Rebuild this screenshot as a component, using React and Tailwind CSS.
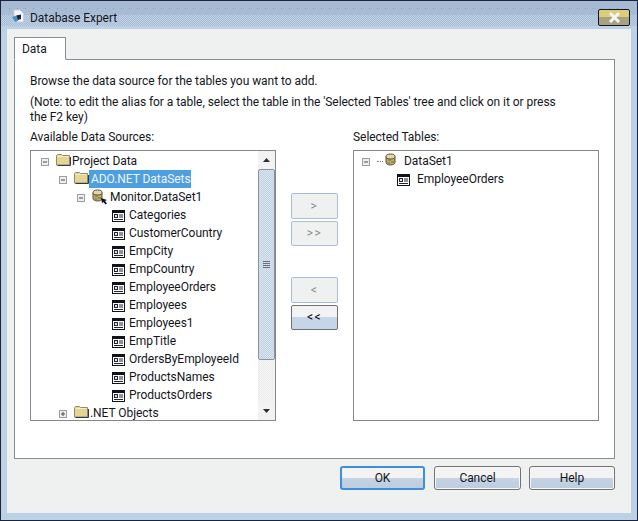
import React from "react";

const Expander = ({ plus }) => (
  <svg width="8" height="8" viewBox="0 0 8 8" className="shrink-0 mt-[2px]">
    <rect x="0.5" y="0.5" width="7" height="7" fill="#eeeeee" stroke="#989da6" />
    <path d={plus ? "M2 4H6M4 2V6" : "M2 4H6"} stroke="#4a4a4a" />
  </svg>
);

const Folder = () => (
  <svg width="15" height="12" viewBox="0 0 15 12" className="shrink-0 -mt-[2px]">
    <path d="M0.5 11V1.5L1.5 0.5H5.5L6.5 1.5H13.5V11Z" fill="#e4d690" stroke="#8c8a70" />
    <path d="M1.5 11.5H14.5V3" fill="none" stroke="#33374d" />
    <path d="M1.5 2.5H12.5" stroke="#f3ecc4" />
  </svg>
);

const TableIcon = () => (
  <svg width="13" height="12" viewBox="0 0 13 12" className="shrink-0 mt-[2px]">
    <rect x="0.5" y="0.5" width="12" height="11" fill="#fff" stroke="#10121c" />
    <rect x="1" y="1" width="11" height="2" fill="#10121c" />
    <rect x="2.5" y="4.5" width="3" height="3" fill="#dfe8f3" stroke="#20242f" />
    <path d="M7 5H11M7 7H11M2 9.5H11" stroke="#20242f" />
  </svg>
);

const DbIcon = ({ cursor }) => (
  <svg width="17" height="16" viewBox="0 0 17 16" className="shrink-0">
    <path d="M1 3.5V9.5C1 11 3 12 5.5 12S10 11 10 9.5V3.5Z" fill="#c2ab5c" stroke="#55503f" />
    <ellipse cx="5.5" cy="3.5" rx="4.5" ry="2.5" fill="#e2d9a2" stroke="#55503f" />
    <path d="M3 7H6M6 9H9M2.5 10H5" stroke="#6c6a68" />
    {cursor && <path d="M9 9L15 11L13 12L15 14.5L13.5 15.5L11.5 13L10 14Z" fill="#10121c" />}
  </svg>
);

const Row = ({ pl, children }) => (
  <div className="h-[18px] pt-[2px] flex items-center whitespace-nowrap" style={{ paddingLeft: pl }}>
    {children}
  </div>
);

const tables = [
  "Categories",
  "CustomerCountry",
  "EmpCity",
  "EmpCountry",
  "EmployeeOrders",
  "Employees",
  "Employees1",
  "EmpTitle",
  "OrdersByEmployeeId",
  "ProductsNames",
  "ProductsOrders",
];

const Arrow = ({ up }) => (
  <svg width="7" height="4" viewBox="0 0 7 4">
    <path d={up ? "M3.5 0L7 4H0Z" : "M0 0H7L3.5 4Z"} fill="#2c2f3a" />
  </svg>
);

const Scrollbar = () => (
  <div className="w-[17px] shrink-0 flex flex-col bg-[#f1f2f1]">
    <div className="h-[18px] flex items-center justify-center">
      <Arrow up />
    </div>
    <div className="h-[191px] border border-[#8b929c] rounded-[2px] bg-[conic-gradient(#dbe5f0_25%,#c0d1e4_0_50%,#dbe5f0_0_75%,#c0d1e4_0)] bg-[length:2px_2px] flex items-center justify-center">
      <div className="w-[7px] h-[7px] bg-[repeating-linear-gradient(#6c7076_0_1px,transparent_1px_2px)]" />
    </div>
    <div className="flex-1 bg-[conic-gradient(#f7f7f7_25%,#e9ebea_0_50%,#f7f7f7_0_75%,#e9ebea_0)] bg-[length:2px_2px]" />
    <div className="h-[18px] flex items-center justify-center">
      <Arrow />
    </div>
  </div>
);

const SideButton = ({ label, active, className = "" }) => (
  <button
    className={
      "w-[47px] rounded-[2px] border text-[12px] tracking-[1.5px] flex items-center justify-center " +
      (active
        ? "border-[#707070] text-black bg-[linear-gradient(#f2f3f2_50%,#c5d6e8_50%)] "
        : "border-[#aabdd8] text-[#8a8d92] bg-[#eff1f0] ") +
      className
    }
  >
    {label}
  </button>
);

const DialogButton = ({ label, w, primary }) => (
  <button
    className={
      "h-[24px] pt-px rounded-[3px] border text-[12px] text-[#14161c] flex items-center justify-center bg-[linear-gradient(#f2f3f2_48%,#c6d4e4_48%,#bccddf)] shadow-[inset_0_0_0_1px_#f7f8f8] " +
      w +
      (primary ? " border-[#3c8fd8] border-2 shadow-none" : " border-[#737373]")
    }
  >
    {label}
  </button>
);

export default function App() {
  return (
    <div
      className="w-[638px] h-[521px] flex flex-col border border-[#1c2340] bg-[#bdd1e5] text-[12px] leading-[15px] tracking-[-0.05px] text-[#14161c]"
      style={{ fontFamily: 'Roboto, "Noto Sans", sans-serif' }}
    >
      {/* Title bar */}
      <div className="h-[28px] shrink-0 flex items-start pt-[8px] pl-[11px] pr-[7px] [background:repeating-linear-gradient(90deg,#7ea0cb_0_1px,transparent_1px_8px)_8px_7px/620px_1px_no-repeat,linear-gradient(#a5b9d3,#a9bcd6_14px,transparent_14px,transparent_25px,#bdd1e5_25px),conic-gradient(#a9bcd6_25%,#bdd1e5_0_50%,#a9bcd6_0_75%,#bdd1e5_0)_0_0/2px_2px]">
        <svg width="12" height="15" viewBox="0 0 12 15" className="shrink-0">
          <path d="M2 1H8L11.5 4.5V13H2Z" fill="#f5f6f8" stroke="#c9ced6" />
          <path d="M0 8L6 6V12L3 13Z" fill="#4a90c8" />
          <path d="M4.5 6.5L9 5.5V10L6 11Z" fill="#20242f" />
        </svg>
        <span className="ml-[6px] leading-[18px]">Database Expert</span>
        <div className="ml-auto w-[32px] h-[17px] rounded-[2px] border border-[#12172c] bg-[linear-gradient(#dccd7b_50%,#a8a27e_50%)] flex items-center justify-center">
          <svg width="13" height="11" viewBox="0 0 13 11">
            <path d="M2 1L11 10M11 1L2 10" stroke="#f5f6f6" strokeWidth="3" />
          </svg>
        </div>
      </div>

      {/* Client area */}
      <div className="mx-[6px] w-[624px] h-[484px] bg-[#eff1f0] flex flex-col pl-[7px]">
        <div className="h-[8px]" />
        <div className="w-[52px] h-[23px] pt-[2px] -mb-px relative z-10 bg-white border border-[#898c95] border-b-white pl-[7px] flex items-center">
          Data
        </div>
        <div className="w-[601px] h-[400px] bg-white border border-[#898c95] pt-[14px] pl-[15px]">
          <p>Browse the data source for the tables you want to add.</p>
          <p className="mt-[6px] w-[570px]">
            (Note: to edit the alias for a table, select the table in the 'Selected Tables' tree and click on it or press
            <br />
            the F2 key)
          </p>
          <div className="flex mt-[5px]">
            <div className="w-[323px]">Available Data Sources:</div>
            <div>Selected Tables:</div>
          </div>
          <div className="flex mt-[5px]">
            {/* Left list */}
            <div className="w-[246px] h-[271px] border border-[#828790] flex">
              <div className="flex-1 min-w-0 overflow-hidden">
                <Row pl={10}>
                  <Expander />
                  <span className="ml-[7px] flex"><Folder /></span>
                  <span className="ml-[1px]">Project Data</span>
                </Row>
                <Row pl={28}>
                  <Expander />
                  <span className="ml-[7px] flex"><Folder /></span>
                  <span className="h-[18px] w-[102px] bg-[#4e9fe0] text-[#eef5fb] pl-[2px] flex items-center">ADO.NET DataSets</span>
                </Row>
                <Row pl={46}>
                  <Expander />
                  <span className="ml-[7px] flex"><DbIcon cursor /></span>
                  <span className="ml-[1px]">Monitor.DataSet1</span>
                </Row>
                {tables.map((t) => (
                  <Row pl={81} key={t}>
                    <TableIcon />
                    <span className="ml-[4px]">{t}</span>
                  </Row>
                ))}
                <Row pl={28}>
                  <Expander plus />
                  <span className="ml-[7px] flex"><Folder /></span>
                  <span className="ml-[1px]">.NET Objects</span>
                </Row>
              </div>
              <Scrollbar />
            </div>

            {/* Middle buttons */}
            <div className="w-[77px] pl-[15px] pt-[43px] flex flex-col">
              <SideButton label=">" className="h-[26px]" />
              <SideButton label=">>" className="h-[25px] mt-[2px]" />
              <SideButton label="<" className="h-[26px] mt-[31px]" />
              <SideButton label="<<" active className="h-[25px] mt-[2px]" />
            </div>

            {/* Right list */}
            <div className="w-[246px] h-[271px] border border-[#828790]">
              <Row pl={8}>
                <Expander />
                <span className="ml-[7px] w-[6px] border-t border-dotted border-[#808080]" />
                <span className="ml-[2px] flex"><DbIcon /></span>
                <span className="ml-[2px]">DataSet1</span>
              </Row>
              <Row pl={43}>
                <TableIcon />
                <span className="ml-[7px]">EmployeeOrders</span>
              </Row>
            </div>
          </div>
        </div>

        {/* Footer buttons */}
        <div className="flex mt-[7px] pl-[326px]">
          <DialogButton label="OK" w="w-[85px]" primary />
          <div className="w-[9px]" />
          <DialogButton label="Cancel" w="w-[87px]" />
          <div className="w-[8px]" />
          <DialogButton label="Help" w="w-[86px]" />
        </div>
      </div>
    </div>
  );
}
